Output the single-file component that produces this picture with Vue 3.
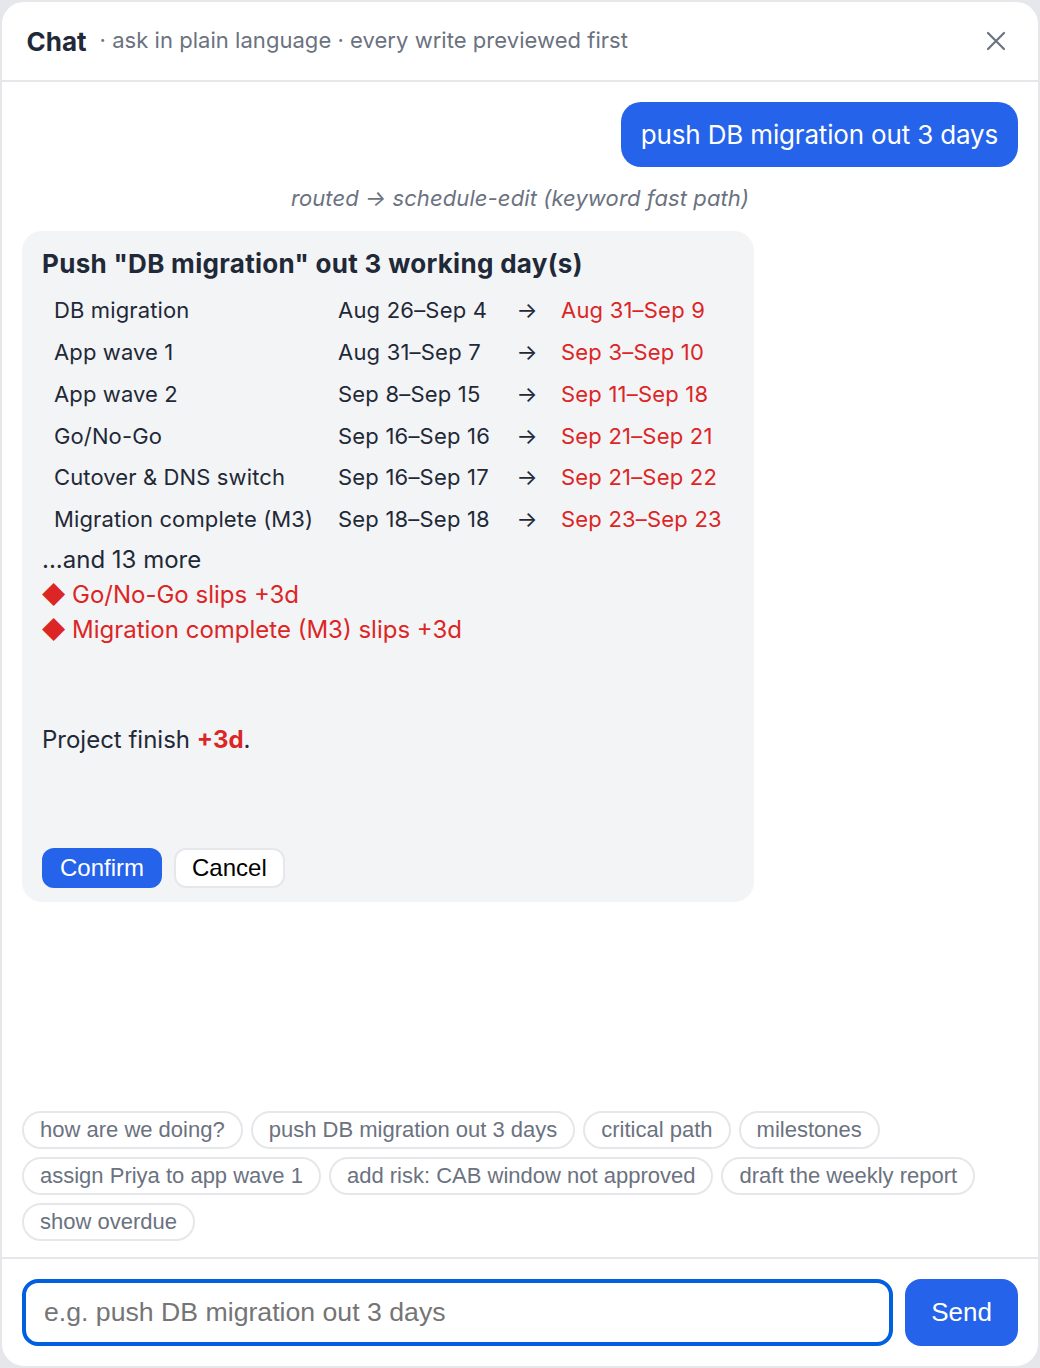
<script setup>
const rows = [
  ['DB migration', 'Aug 26–Sep 4', 'Aug 31–Sep 9'],
  ['App wave 1', 'Aug 31–Sep 7', 'Sep 3–Sep 10'],
  ['App wave 2', 'Sep 8–Sep 15', 'Sep 11–Sep 18'],
  ['Go/No-Go', 'Sep 16–Sep 16', 'Sep 21–Sep 21'],
  ['Cutover & DNS switch', 'Sep 16–Sep 17', 'Sep 21–Sep 22'],
  ['Migration complete (M3)', 'Sep 18–Sep 18', 'Sep 23–Sep 23'],
]
const slips = ['Go/No-Go slips +3d', 'Migration complete (M3) slips +3d']
const chips = [
  'how are we doing?', 'push DB migration out 3 days', 'critical path', 'milestones',
  'assign Priya to app wave 1', 'add risk: CAB window not approved', 'draft the weekly report', 'show overdue',
]
</script>

<template>
  <div class="panel">
    <header class="head">
      <div class="head-text">
        <strong class="title">Chat</strong>
        <span class="sub">· ask in plain language · every write previewed first</span>
      </div>
      <svg class="close" viewBox="0 0 24 24" width="24" height="24" fill="none" stroke="#6b7280" stroke-width="2.2" stroke-linecap="round">
        <path d="M4 4L20 20M20 4L4 20" />
      </svg>
    </header>
    <main class="log">
      <div class="user-row"><div class="bubble">push DB migration out 3 days</div></div>
      <div class="route">routed → schedule-edit (keyword fast path)</div>
      <section class="card">
        <h3 class="card-title">Push "DB migration" out 3 working day(s)</h3>
        <table class="diff">
          <tbody>
            <tr v-for="r in rows" :key="r[0]">
              <td class="name">{{ r[0] }}</td>
              <td class="old">{{ r[1] }}</td>
              <td class="arrow">→</td>
              <td class="new">{{ r[2] }}</td>
            </tr>
          </tbody>
        </table>
        <div class="more">...and 13 more</div>
        <div v-for="s in slips" :key="s" class="slip"><span class="dia">◆</span> {{ s }}</div>
        <p class="finish">Project finish <b>+3d</b>.</p>
        <div class="actions">
          <button class="btn primary">Confirm</button>
          <button class="btn ghost">Cancel</button>
        </div>
      </section>
    </main>
    <div class="chips">
      <span v-for="c in chips" :key="c" class="chip">{{ c }}</span>
    </div>
    <footer class="foot">
      <input class="input" placeholder="e.g. push DB migration out 3 days" />
      <button class="send">Send</button>
    </footer>
  </div>
</template>

<style>
html, body { margin: 0; background: #e5e7eb; }
</style>

<style scoped>
.panel {
  box-sizing: border-box;
  width: 1040px;
  height: 1368px;
  background: #fff;
  border: 2px solid #e5e7eb;
  border-radius: 24px;
  display: flex;
  flex-direction: column;
  font-family: Inter, sans-serif;
  color: #1f2937;
  overflow: hidden;
}
.head {
  height: 80px;
  box-sizing: border-box;
  flex: none;
  padding: 0 30px 0 24.5px;
  display: flex;
  align-items: center;
  justify-content: space-between;
  border-bottom: 2px solid #e5e7eb;
}
.head-text { display: flex; align-items: center; gap: 13px; }
.title { font-size: 26px; font-weight: 700; color: #1f2937; }
.sub { font-size: 22px; letter-spacing: 0.04px; color: #6b7280; position: relative; top: -1px; }
.log { flex: 1; padding: 20px 20px 0; display: flex; flex-direction: column; }
.user-row { display: flex; justify-content: flex-end; }
.bubble {
  background: #2563eb; color: #fff; font-size: 26px; line-height: 33px; letter-spacing: -0.17px;
  padding: 16px 20px; border-radius: 20px;
}
.route { text-align: center; font-style: italic; color: #6b7280; font-size: 22px; letter-spacing: 0.1px; margin-top: 17px; line-height: 28px; }
.card {
  box-sizing: border-box;
  width: 732px;
  height: 671px;
  margin-top: 19px;
  background: #f3f4f6;
  border-radius: 20px;
  padding: 16px 20px 14px;
  display: flex;
  flex-direction: column;
  font-size: 24px;
}
.card-title { margin: 0 0 8px; font-size: 26px; line-height: 34px; font-weight: 700; letter-spacing: 0.3px; color: #1f2937; }
.diff { border-collapse: separate; border-spacing: 0; font-size: 22px; width: 692px; table-layout: fixed; }
.diff td { padding: 4px 12px; height: 33.88px; white-space: nowrap; }
.name { width: 260px; letter-spacing: 0.12px; }
.old { width: 155px; font-kerning: none; letter-spacing: 0.2px; }
.diff .arrow { width: 44px; padding: 4px 0; text-align: center; }
.new { font-kerning: none; letter-spacing: 0.2px; color: #dc2626; }
.more { line-height: 35px; margin-top: 1.5px; }
.slip { line-height: 35px; color: #dc2626; }
.dia { margin-left: -1px; margin-right: -1px; }
.finish { margin: 75px 0 0; line-height: 35px; }
.finish b { color: #dc2626; }
.actions { margin-top: auto; display: flex; gap: 12px; }
.btn {
  height: 40px; border-radius: 12px; font-family: "Liberation Sans", Arial, sans-serif; font-size: 24px; padding: 0 18px; box-sizing: border-box;
}
.primary { background: #2563eb; color: #fff; border: none; }
.ghost { background: #fff; color: #000; border: 2px solid #e5e7eb; padding: 0 16px; }
.chips { display: flex; flex-wrap: wrap; gap: 8px; padding: 0 20px 16px; }
.chip {
  border: 2px solid #e5e7eb; border-radius: 999px; padding: 0 16px; height: 38px; box-sizing: border-box;
  font-family: "Liberation Sans", Arial, sans-serif; font-size: 22px; line-height: 34px; color: #6b7280;
}
.foot { flex: none; height: 109px; box-sizing: border-box; border-top: 2px solid #e5e7eb; padding: 20px 20px 20px; display: flex; gap: 12px; }
.input {
  flex: 1; box-sizing: border-box; height: 67px; border: 4px solid #0060df; border-radius: 16px; padding: 0 18px; outline: none;
  font-family: "Liberation Sans", Arial, sans-serif; font-size: 26.67px;
}
.input::placeholder { color: #757575; }
.send {
  width: 113px; height: 67px; border: none; border-radius: 16px; background: #2563eb; color: #fff;
  font-family: "Liberation Sans", Arial, sans-serif; font-size: 26px;
}
</style>
